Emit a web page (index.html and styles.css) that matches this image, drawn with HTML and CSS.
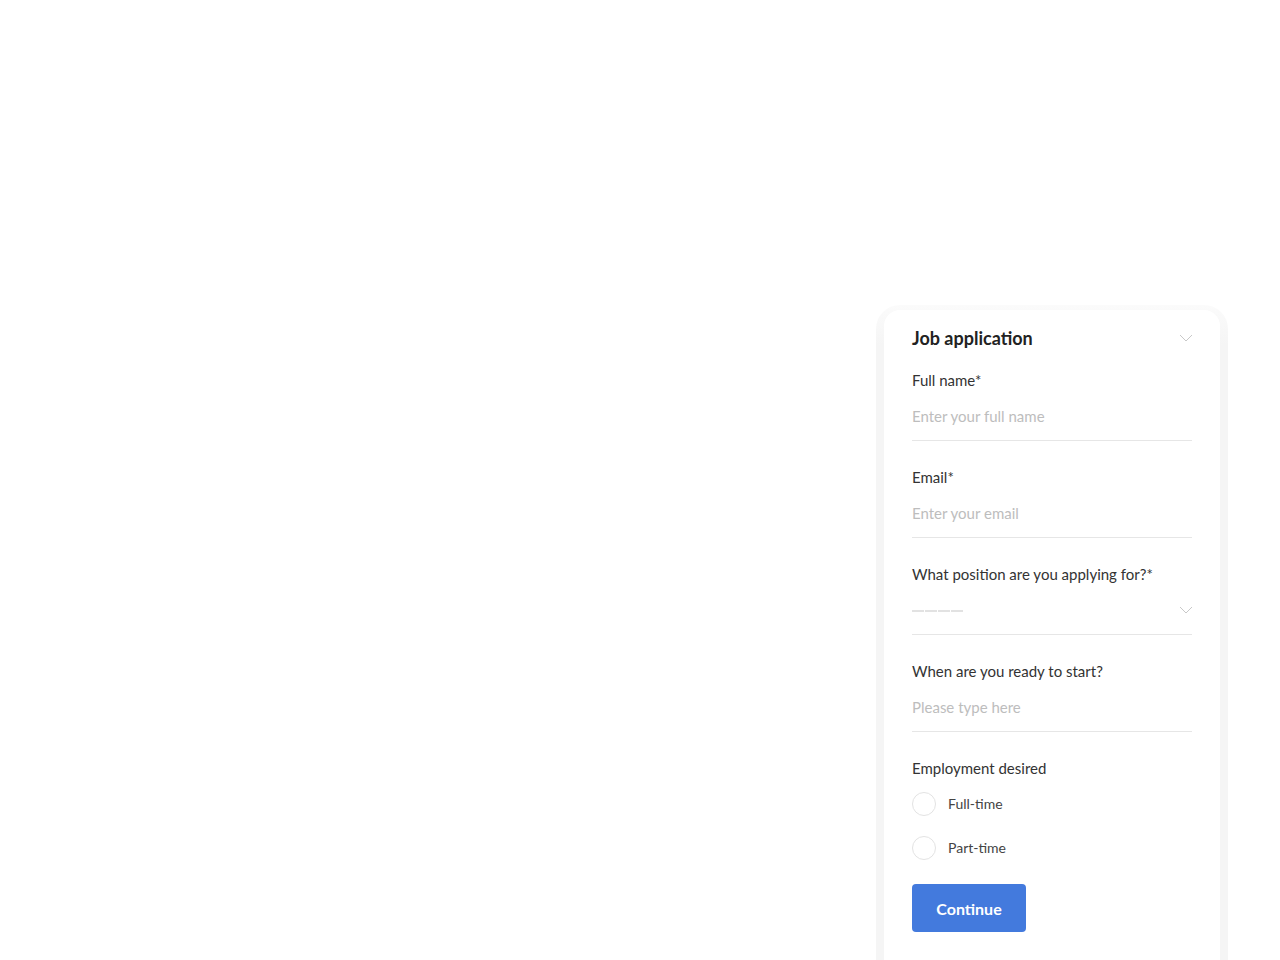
FILE: index.html
```html
<!DOCTYPE html>
<html>
<head>
<meta charset="utf-8">
<link rel="stylesheet" href="styles.css">
</head>
<body>
<div class="page">
  <div class="frame">
    <div class="card">
      <div class="header">
        <h1 class="title">Job application</h1>
        <svg class="chev" width="14" height="8" viewBox="0 0 14 8"><path d="M1 1 L7 7 L13 1" fill="none" stroke="#c8c8c8" stroke-width="1"/></svg>
      </div>
      <div class="field">
        <div class="label">Full name*</div>
        <div class="input"><span class="ph">Enter your full name</span></div>
      </div>
      <div class="field">
        <div class="label">Email*</div>
        <div class="input"><span class="ph">Enter your email</span></div>
      </div>
      <div class="field">
        <div class="label">What position are you applying for?*</div>
        <div class="input select">
          <span class="dashes"><i></i><i></i><i></i><i></i></span>
          <svg class="chev" width="14" height="8" viewBox="0 0 14 8"><path d="M1 1 L7 7 L13 1" fill="none" stroke="#c8c8c8" stroke-width="1"/></svg>
        </div>
      </div>
      <div class="field">
        <div class="label">When are you ready to start?</div>
        <div class="input"><span class="ph">Please type here</span></div>
      </div>
      <div class="group">
        <div class="label">Employment desired</div>
        <div class="radios">
          <label class="radio"><span class="circle"></span><span class="rtext">Full-time</span></label>
          <label class="radio"><span class="circle"></span><span class="rtext">Part-time</span></label>
        </div>
        <button class="btn">Continue</button>
      </div>
    </div>
  </div>
</div>
</body>
</html>
```
FILE: styles.css
```css
html, body {
  margin: 0;
  padding: 0;
  background: #ffffff;
  overflow: hidden;
}
body {
  font-family: "Source Sans Pro", Lato, "Open Sans", sans-serif;
  color: #333;
}
.page {
  width: 1280px;
  height: 960px;
  display: flex;
  justify-content: flex-end;
  align-items: flex-start;
  padding-top: 305px;
  padding-right: 52px;
  box-sizing: border-box;
  overflow: hidden;
}
.frame {
  width: 352px;
  padding: 5px 8px 40px 8px;
  box-sizing: border-box;
  background: linear-gradient(to bottom, #fbfbfb 0px, #f5f5f5 40px, #f5f5f5 100%);
  border-radius: 24px 24px 0 0;
  flex-shrink: 0;
}
.card {
  background: #ffffff;
  border-radius: 16px 16px 0 0;
  padding: 16px 28px 40px 28px;
}
.header {
  display: flex;
  align-items: center;
  justify-content: space-between;
  height: 24px;
}
.title {
  margin: 0;
  font-size: 18px;
  font-weight: 700;
  line-height: 24px;
  color: #222;
}
.header .chev {
  margin-right: -1px;
  margin-top: 0;
}
.field {
  margin-top: 20px;
}
.field + .field {
  margin-top: 26px;
}
.label {
  font-size: 15px;
  line-height: 20px;
  color: #333;
}
.input {
  margin-top: 8px;
  padding: 8px 0 14px 0;
  border-bottom: 1px solid #e6e6e6;
  height: 20px;
  display: flex;
  align-items: center;
  justify-content: space-between;
}
.ph {
  font-size: 15px;
  line-height: 20px;
  color: #bdbdbd;
}
.dashes {
  display: flex;
  gap: 1px;
  margin-top: 2px;
}
.dashes i {
  display: block;
  width: 12px;
  height: 2px;
  background: #e2e2e2;
}
.select .chev {
  margin-right: -1px;
}
.group {
  margin-top: 26px;
}
.radios {
  margin-top: 14px;
  display: flex;
  flex-direction: column;
  gap: 20px;
}
.radio {
  display: flex;
  align-items: center;
  height: 24px;
}
.circle {
  width: 22px;
  height: 22px;
  border: 1px solid #e3e3e3;
  border-radius: 50%;
  box-sizing: content-box;
}
.rtext {
  margin-left: 12px;
  font-size: 14px;
  line-height: 18px;
  margin-top: -1px;
  color: #444;
}
.btn {
  margin-top: 24px;
  width: 114px;
  height: 48px;
  border: none;
  border-radius: 4px;
  background: #437add;
  color: #fff;
  font-family: inherit;
  font-size: 16px;
  font-weight: 700;
  padding: 0;
}
```
